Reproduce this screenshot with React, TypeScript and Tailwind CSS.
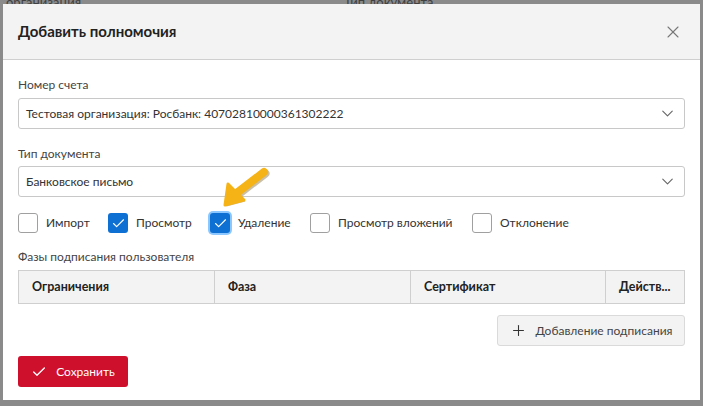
import { X, ChevronDown, Check, Plus } from "lucide-react";

const perms = [
  { label: "Импорт", checked: false, w: "w-[90px]" },
  { label: "Просмотр", checked: true, w: "w-[102px]" },
  { label: "Удаление", checked: true, focus: true, w: "w-[100px]" },
  { label: "Просмотр вложений", checked: false, w: "w-[162px]" },
  { label: "Отклонение", checked: false, w: "w-[120px]" },
];

const columns = [
  { title: "Ограничения", w: "w-[196px]" },
  { title: "Фаза", w: "w-[196px]" },
  { title: "Сертификат", w: "w-[195px]" },
  { title: "Действ...", w: "flex-1" },
];

const Select: React.FC<{ value: string }> = ({ value }) => (
  <div className="h-[31px] flex items-center justify-between border border-[#c8c8c8] rounded-[3px] pl-[7px] pr-[7px] bg-white">
    <span className="text-[12px] text-[#333]">{value}</span>
    <ChevronDown className="w-[19px] h-[19px] text-[#666]" strokeWidth={1.4} />
  </div>
);

export default function App() {
  return (
    <div className="relative w-[703px] h-[406px] bg-[#8a8a8a] overflow-hidden" style={{ fontFamily: 'Lato, "Open Sans", sans-serif' }}>
      {/* background page peeking through */}
      <div className="h-[4px] flex text-[13px] leading-[4px] text-[#222] overflow-hidden">
        <span className="pl-[6px] w-[330px] opacity-70">организация</span>
        <span className="pl-[14px] opacity-70">Тип документа</span>
      </div>

      <div className="ml-[3px] w-[697px] h-[396px] bg-white flex flex-col">
        {/* header */}
        <div className="h-[56px] bg-[#f3f3f3] border-b border-[#cfcfcf] flex items-center justify-between pl-[15px] pr-[17px]">
          <h1 className="text-[15px] font-bold text-[#222]">Добавить полномочия</h1>
          <X className="w-[20px] h-[20px] text-[#777]" strokeWidth={1.3} />
        </div>

        {/* body */}
        <div className="px-[15px] pt-[16px] flex flex-col">
          <label className="text-[12px] text-[#444] leading-[18px]">Номер счета</label>
          <div className="mt-[4px]">
            <Select value="Тестовая организация: Росбанк: 40702810000361302222" />
          </div>

          <label className="text-[12px] text-[#444] leading-[18px] mt-[16px]">Тип документа</label>
          <div className="mt-[3px]">
            <Select value="Банковское письмо" />
          </div>

          <div className="flex items-center mt-[15px] h-[22px]">
            {perms.map((p) => (
              <div key={p.label} className={`${p.w} flex items-center`}>
                <div
                  className={
                    p.checked
                      ? p.focus
                        ? "w-[20px] h-[20px] rounded-[3px] bg-[#0f70d4] flex items-center justify-center ring-[2px] ring-[#8cc8ff]"
                        : "w-[20px] h-[20px] rounded-[3px] bg-[#0f70d4] flex items-center justify-center"
                      : "w-[20px] h-[20px] rounded-[3px] border border-[#a0a0a0] bg-white"
                  }
                >
                  {p.checked && <Check className="w-[15px] h-[15px] text-white" strokeWidth={1.8} />}
                </div>
                <span className="ml-[8px] text-[12px] text-[#333]">{p.label}</span>
              </div>
            ))}
          </div>

          <label className="text-[12px] text-[#444] leading-[18px] mt-[14px]">Фазы подписания пользователя</label>

          <div className="mt-[4px] flex h-[34px] bg-[#f3f3f3] border border-[#cfcfcf]">
            {columns.map((c, i) => (
              <div
                key={c.title}
                className={`${c.w} flex items-center px-[13px] text-[12.5px] font-bold text-[#222] ${i < columns.length - 1 ? "border-r border-[#cfcfcf]" : ""}`}
              >
                {c.title}
              </div>
            ))}
          </div>

          <div className="flex justify-end mt-[11px]">
            <button className="h-[31px] w-[188px] flex items-center justify-center gap-[9px] bg-[#f3f3f3] border border-[#dadada] rounded-[3px] text-[12px] text-[#444]">
              <Plus className="w-[17px] h-[17px] text-[#333]" strokeWidth={1.5} />
              Добавление подписания
            </button>
          </div>

          <div className="mt-[10px]">
            <button className="h-[31px] w-[110px] flex items-center justify-center gap-[9px] bg-[#cf102d] rounded-[3px] text-[12px] text-white">
              <Check className="w-[16px] h-[16px] text-white" strokeWidth={2} />
              Сохранить
            </button>
          </div>
        </div>
      </div>

      {/* annotation arrow */}
      <svg className="absolute left-[214px] top-[164px]" width="60" height="50" viewBox="0 0 60 50">
        <g transform="translate(1.5,1.5)" opacity="0.35">
          <path d="M50 8 L24 28" stroke="#6b4a00" strokeWidth="8" strokeLinecap="round" fill="none" />
          <path d="M11 41 L14 20 L30 36 Z" fill="#6b4a00" />
        </g>
        <path d="M50 8 L24 28" stroke="#f5b316" strokeWidth="8" strokeLinecap="round" fill="none" />
        <path d="M11 41 L14 20 L30 36 Z" fill="#f5b316" stroke="#f5b316" strokeWidth="3" strokeLinejoin="round" />
      </svg>
    </div>
  );
}
